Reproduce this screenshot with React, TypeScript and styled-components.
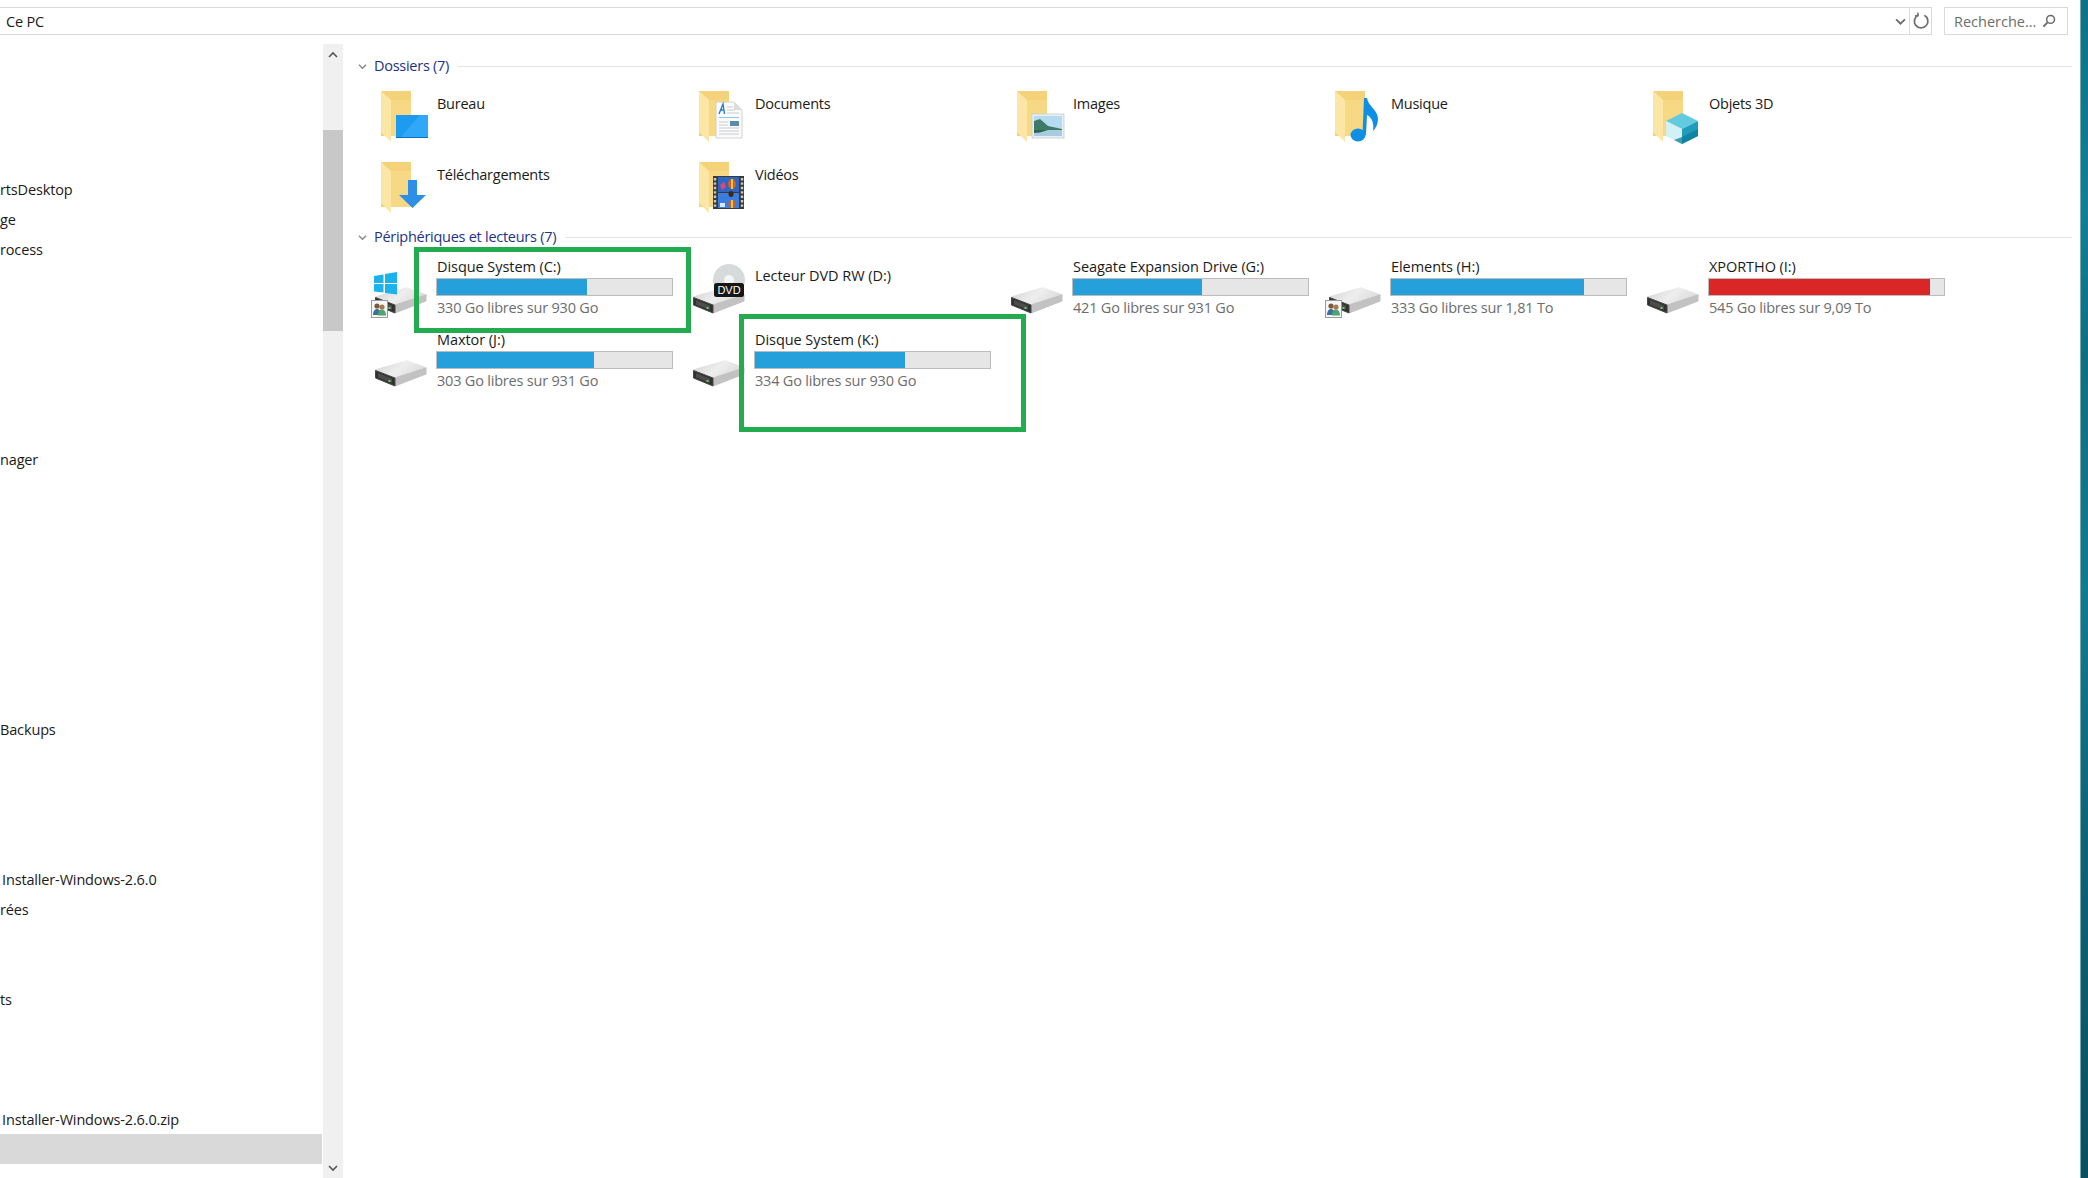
import React from 'react';
import styled, { createGlobalStyle } from 'styled-components';

const GlobalStyle = createGlobalStyle`
  html, body {
    margin: 0;
    padding: 0;
    background: #ffffff;
  }
  body {
    font-family: "Open Sans", "Noto Sans", "Liberation Sans", sans-serif;
    font-size: 14.5px;
    color: #1a1a1a;
    overflow: hidden;
  }
`;

type FolderKind = 'desktop' | 'documents' | 'images' | 'music' | 'objects' | 'downloads' | 'videos';

const folders: { name: string; kind: FolderKind }[] = [
  { name: 'Bureau', kind: 'desktop' },
  { name: 'Documents', kind: 'documents' },
  { name: 'Images', kind: 'images' },
  { name: 'Musique', kind: 'music' },
  { name: 'Objets 3D', kind: 'objects' },
  { name: 'Téléchargements', kind: 'downloads' },
  { name: 'Vidéos', kind: 'videos' },
];

interface Drive {
  name: string;
  free?: string;
  used?: number;
  critical?: boolean;
  logo?: boolean;
  shared?: boolean;
  dvd?: boolean;
  box?: { left: number; top: number; width: number; height: number };
}

const drives: Drive[] = [
  { name: 'Disque System (C:)', free: '330 Go libres sur 930 Go', used: 64, logo: true, shared: true, box: { left: 44, top: -6, width: 277, height: 86 } },
  { name: 'Lecteur DVD RW (D:)', dvd: true },
  { name: 'Seagate Expansion Drive (G:)', free: '421 Go libres sur 931 Go', used: 55 },
  { name: 'Elements (H:)', free: '333 Go libres sur 1,81 To', used: 82, shared: true },
  { name: 'XPORTHO (I:)', free: '545 Go libres sur 9,09 To', used: 94, critical: true },
  { name: 'Maxtor (J:)', free: '303 Go libres sur 931 Go', used: 67 },
  { name: 'Disque System (K:)', free: '334 Go libres sur 930 Go', used: 64, box: { left: 51, top: -12, width: 287, height: 118 } },
];

// la liste de gauche : lignes de 30px, le texte est coupé par le bord de la fenêtre
const navRows: Record<number, { text: string; indent?: boolean }> = {
  4: { text: 'rtsDesktop' },
  5: { text: 'ge' },
  6: { text: 'rocess' },
  13: { text: 'nager' },
  22: { text: 'Backups' },
  27: { text: 'Installer-Windows-2.6.0', indent: true },
  28: { text: 'rées' },
  31: { text: 'ts' },
  35: { text: 'Installer-Windows-2.6.0.zip', indent: true },
};
const SELECTED_ROW = 36;

const FolderBase = () => (
  <>
    <rect x="11" y="3" width="30" height="45" fill="#f3d27a" />
    <rect x="21" y="12" width="20" height="36" fill="#f6d885" />
    <polygon points="11,3 21,12 21,54 11,44" fill="#fbe6a6" />
  </>
);

const FolderOverlay = ({ kind }: { kind: FolderKind }) => {
  switch (kind) {
    case 'desktop':
      return (
        <>
          <rect x="26" y="27" width="32" height="23" fill="#1c9bf0" />
          <polygon points="30,50 50,27 58,27 58,50" fill="#3fb0fb" opacity="0.6" />
          <rect x="26" y="49" width="32" height="1" fill="#0a72c4" />
        </>
      );
    case 'documents':
      return (
        <>
          <polygon points="28,14 46,14 54,22 54,50 28,50" fill="#fbfbfb" stroke="#c9c9c9" strokeWidth="0.8" />
          <polygon points="46,14 54,22 46,22" fill="#dcdcdc" />
          <path d="M31 26 L35 16 L36.5 26 M32.5 22 L36 22" stroke="#2a7fc9" strokeWidth="1.4" fill="none" />
          <path d="M39 19h6M39 22h8M39 25h12M31 40h20M31 43h20M31 46h20" stroke="#c6cacd" strokeWidth="1" />
          <path d="M31 29.5h20" stroke="#8cc6e4" strokeWidth="1" />
          <rect x="42" y="33" width="9" height="5" fill="#5a8ba8" />
          <path d="M31 34h9M31 37h9" stroke="#c6cacd" strokeWidth="1" />
        </>
      );
    case 'images':
      return (
        <>
          <rect x="26" y="26" width="32" height="24" fill="#e8eef2" stroke="#c3ced6" strokeWidth="0.8" />
          <rect x="28" y="28" width="28" height="14" fill="#b5dbf0" />
          <polygon points="28,33 34,31 42,38 56,41 56,43 28,43" fill="#3f7a68" />
          <rect x="28" y="42" width="28" height="6" fill="#a8cbdd" />
          <polygon points="28,42 42,42 34,44.5 28,45" fill="#2f6455" />
        </>
      );
    case 'music':
      return (
        <>
          <ellipse cx="34" cy="47" rx="7.5" ry="6.5" fill="#0f8fe4" />
          <path d="M38.5 47 L40 10 L43 10 C44 18 54 22 54 31 C54 36 52 40 49 43 C50 37 49 30 43 27 L42 47 Z" fill="#0f8fe4" />
        </>
      );
    case 'objects':
      return (
        <>
          <polygon points="40,25 56,33 40,41 24,33" fill="#63cbe0" />
          <polygon points="24,33 40,41 40,56 24,48" fill="#d2f1f6" />
          <polygon points="40,41 56,33 56,48 40,56" fill="#1f9dbb" />
          <polygon points="40,49 56,41 56,48 40,56 32,52" fill="#0f7c9b" opacity="0.75" />
        </>
      );
    case 'downloads':
      return <polygon points="38,21 47,21 47,36 56,36 42.5,49 29,36 38,36" fill="#2d8fe5" />;
    case 'videos':
      return (
        <>
          <rect x="25" y="17" width="31" height="33" fill="#3a3a3a" />
          <path d="M27 19v29M54 19v29" stroke="#c9c9c9" strokeWidth="2.4" strokeDasharray="2.4 2" />
          <rect x="30" y="18" width="21" height="15" fill="#2f66c4" />
          <rect x="30" y="34" width="21" height="15" fill="#3b7ee0" />
          <ellipse cx="44" cy="25" rx="4" ry="5" fill="#c8612a" />
          <rect x="43" y="20" width="2" height="10" fill="#f0c53a" />
          <path d="M32 26l4-3 2 5-4 3z" fill="#d84a7a" />
          <ellipse cx="44" cy="45" rx="3.5" ry="4" fill="#c8612a" />
          <rect x="43" y="41" width="2" height="8" fill="#f0c53a" />
          <ellipse cx="43" cy="35" rx="2.5" ry="3" fill="#3a2a1a" />
          <rect x="32" y="44" width="5" height="4" fill="#dfe6ef" />
        </>
      );
  }
};

const FolderIcon = ({ kind }: { kind: FolderKind }) => (
  <TileIcon viewBox="0 0 67 70">
    <FolderBase />
    <FolderOverlay kind={kind} />
  </TileIcon>
);

const HardDisk = () => (
  <g transform="translate(5 34)" strokeLinejoin="round">
    <defs>
      <linearGradient id="diskTop" x1="0" y1="0" x2="1" y2="0.4">
        <stop offset="0" stopColor="#d2d2d2" />
        <stop offset="0.55" stopColor="#eeeeee" />
        <stop offset="1" stopColor="#dcdcdc" />
      </linearGradient>
    </defs>
    <polygon points="1,10 32,1 51,8 20,18" fill="url(#diskTop)" stroke="url(#diskTop)" strokeWidth="1.5" />
    <polygon points="20,18 51,8 51,14 20,26" fill="#c2c2c2" stroke="#c2c2c2" strokeWidth="1" />
    <polygon points="0.5,10.5 20,18 20,26 0.5,18" fill="#303030" stroke="#484848" strokeWidth="1" />
    <polygon points="3,13 17,18.5 17,23 3,17.5" fill="#4c4c4c" />
    <rect x="13.5" y="20" width="2" height="2" fill="#5fd36a" />
  </g>
);

const WindowsLogo = () => (
  <g fill="#1cb2ee">
    <polygon points="4,23 13.5,21.5 13.5,30 4,30" />
    <polygon points="15,21 27,19 27,30 15,30" />
    <polygon points="4,31 13.5,31 13.5,39.5 4,38.5" />
    <polygon points="15,31 27,31 27,41.5 15,40" />
  </g>
);

const SharedBadge = () => (
  <g transform="translate(1 47)">
    <rect x="0.5" y="0.5" width="16" height="17" fill="#f6f6f6" stroke="#9a9a9a" />
    <circle cx="6" cy="6" r="2.6" fill="#7b5a3c" />
    <path d="M2 15c0-4 2-6 4-6s4 2 4 6z" fill="#3d6f9e" />
    <circle cx="11" cy="7" r="2.6" fill="#a47a52" />
    <path d="M7 15.5c0-4 2-6 4-6s4 2 4 6z" fill="#4ea36e" />
  </g>
);

const DvdDisc = () => (
  <>
    <circle cx="41" cy="27" r="16" fill="#d6dadb" />
    <circle cx="41" cy="27" r="5" fill="#f4f6f6" />
    <rect x="26" y="30" width="30" height="14" rx="2.5" fill="#161616" />
    <DvdLabel x="41" y="41" textAnchor="middle">DVD</DvdLabel>
  </>
);

const DriveIcon = ({ drive }: { drive: Drive }) => (
  <TileIcon viewBox="0 0 67 70">
    <HardDisk />
    {drive.dvd && <DvdDisc />}
    {drive.logo && <WindowsLogo />}
    {drive.shared && <SharedBadge />}
  </TileIcon>
);

const Chevron = ({ up, size = 10 }: { up?: boolean; size?: number }) => (
  <svg width={size} height={size} viewBox="0 0 10 10" fill="none">
    <polyline points={up ? '1,7 5,3 9,7' : '1,3 5,7 9,3'} stroke="currentColor" strokeWidth="1.6" />
  </svg>
);

const FileExplorer = () => (
  <Window>
    <AddressRow>
      <AddressBox>
        <AddressText>Ce PC</AddressText>
        <AddressChevron>
          <Chevron size={11} />
        </AddressChevron>
        <RefreshButton>
          <svg width="18" height="18" viewBox="0 0 16 16" fill="none">
            <path d="M5.4 2.8 A6 6 0 1 0 11 2.9" stroke="#707070" strokeWidth="1.6" />
            <polyline points="5.2,0.6 5.4,3.2 2.6,3.6" stroke="#707070" strokeWidth="1.4" />
          </svg>
        </RefreshButton>
      </AddressBox>
      <SearchBox>
        <span>Recherche...</span>
        <svg width="14" height="14" viewBox="0 0 14 14" fill="none">
          <circle cx="8.6" cy="5.4" r="3.9" stroke="#6a6a6a" strokeWidth="1.5" />
          <line x1="5.6" y1="8.4" x2="1.4" y2="12.6" stroke="#6a6a6a" strokeWidth="1.9" />
        </svg>
      </SearchBox>
    </AddressRow>
    <Body>
      <NavPane>
        {Array.from({ length: SELECTED_ROW + 1 }, (_, i) => (
          <NavRow key={i} $selected={i === SELECTED_ROW} $indent={navRows[i]?.indent}>
            {navRows[i]?.text}
          </NavRow>
        ))}
      </NavPane>
      <ScrollBar>
        <ScrollArrow>
          <Chevron up />
        </ScrollArrow>
        <ScrollThumb />
        <ScrollArrow $bottom>
          <Chevron />
        </ScrollArrow>
      </ScrollBar>
      <Content>
        <SectionHeader>
          <SectionChevron>
            <Chevron size={9} />
          </SectionChevron>
          <SectionTitle>Dossiers (7)</SectionTitle>
          <SectionRule />
        </SectionHeader>
        <FolderGrid>
          {folders.map((folder) => (
            <FolderTile key={folder.name}>
              <FolderIcon kind={folder.kind} />
              <FolderName>{folder.name}</FolderName>
            </FolderTile>
          ))}
        </FolderGrid>
        <SectionHeader>
          <SectionChevron>
            <Chevron size={9} />
          </SectionChevron>
          <SectionTitle>Périphériques et lecteurs (7)</SectionTitle>
          <SectionRule />
        </SectionHeader>
        <DriveGrid>
          {drives.map((drive) => (
            <DriveTile key={drive.name}>
              <DriveIcon drive={drive} />
              <DriveInfo $dvd={drive.dvd}>
                <DriveName>{drive.name}</DriveName>
                {drive.used !== undefined && (
                  <>
                    <UsageBar>
                      <UsageFill $critical={drive.critical} style={{ width: `${drive.used}%` }} />
                    </UsageBar>
                    <DriveFree>{drive.free}</DriveFree>
                  </>
                )}
              </DriveInfo>
              {drive.box && (
                <Highlight
                  $left={drive.box.left}
                  $top={drive.box.top}
                  $width={drive.box.width}
                  $height={drive.box.height}
                />
              )}
            </DriveTile>
          ))}
        </DriveGrid>
      </Content>
    </Body>
  </Window>
);

export default function App() {
  return (
    <Page>
      <GlobalStyle />
      <FileExplorer />
      <DesktopEdge />
    </Page>
  );
}

const Page = styled('div')`
  display: flex;
  width: 2088px;
  height: 1178px;
  overflow: hidden;
`;

const Window = styled('div')`
  flex: 1;
  display: flex;
  flex-direction: column;
  min-width: 0;
`;

const DesktopEdge = styled('div')`
  width: 8px;
  border-left: 1px solid #6fa9b3;
  box-sizing: border-box;
  background: linear-gradient(180deg, #0d7386 0%, #0f8096 18%, #0e6f80 30%, #117c8e 50%, #0e6578 70%, #0b4f60 100%);
`;

const AddressRow = styled('div')`
  display: flex;
  align-items: flex-start;
  gap: 12px;
  height: 44px;
  padding: 7px 12px 0 0;
  box-sizing: border-box;
`;

const AddressBox = styled('div')`
  flex: 1;
  display: flex;
  align-items: center;
  height: 28px;
  box-sizing: border-box;
  border: 1px solid #d9d9d9;
  border-left: none;
`;

const AddressText = styled('div')`
  flex: 1;
  padding-left: 6px;
  letter-spacing: -0.2px;
`;

const AddressChevron = styled('div')`
  display: flex;
  color: #6a6a6a;
  padding-right: 3px;
`;

const RefreshButton = styled('div')`
  display: flex;
  align-items: center;
  justify-content: center;
  width: 21px;
  height: 100%;
  border-left: 1px solid #d9d9d9;
`;

const SearchBox = styled('div')`
  display: flex;
  align-items: center;
  justify-content: space-between;
  width: 124px;
  height: 28px;
  box-sizing: border-box;
  padding: 0 11px 0 9px;
  border: 1px solid #d9d9d9;
  color: #6d6d6d;
`;

const Body = styled('div')`
  flex: 1;
  display: flex;
  min-height: 0;
`;

const NavPane = styled('div')`
  width: 322px;
  margin-right: 1px;
  padding-top: 10px;
  box-sizing: border-box;
  white-space: nowrap;
`;

const NavRow = styled('div')<{ $selected?: boolean; $indent?: boolean }>`
  height: 30px;
  line-height: 32px;
  letter-spacing: -0.15px;
  padding-left: ${(p) => (p.$indent ? '2px' : '0')};
  background: ${(p) => (p.$selected ? '#d9d9d9' : 'transparent')};
`;

const ScrollBar = styled('div')`
  position: relative;
  width: 20px;
  padding-top: 86px;
  box-sizing: border-box;
  background: #f0f0f0;
`;

const ScrollThumb = styled('div')`
  height: 201px;
  background: #c8c8c8;
`;

const ScrollArrow = styled('div')<{ $bottom?: boolean }>`
  position: absolute;
  left: 5px;
  display: flex;
  color: #555555;
  ${(p) => (p.$bottom ? 'bottom: 5px;' : 'top: 6px;')}
`;

const Content = styled('div')`
  flex: 1;
  padding: 14px 8px 0 0;
  min-width: 0;
`;

const SectionHeader = styled('div')`
  display: flex;
  align-items: center;
  height: 16px;
  padding-left: 15px;
`;

const SectionChevron = styled('div')`
  display: flex;
  width: 16px;
  color: #8a8a8a;
`;

const SectionTitle = styled('div')`
  color: #1e3287;
  margin-right: 9px;
  line-height: 16px;
  letter-spacing: -0.27px;
  white-space: nowrap;
`;

const SectionRule = styled('div')`
  flex: 1;
  height: 1px;
  background: #e3e3e3;
`;

const FolderGrid = styled('div')`
  display: grid;
  grid-template-columns: repeat(5, 318px);
  grid-auto-rows: 70px;
  row-gap: 1px;
  margin: 14px 0 0 27px;
`;

const FolderTile = styled('div')`
  display: flex;
`;

const TileIcon = styled('svg')`
  flex: none;
  width: 67px;
  height: 70px;
  overflow: visible;
`;

const FolderName = styled('div')`
  padding-top: 6px;
  line-height: 20px;
  letter-spacing: -0.25px;
`;

const DvdLabel = styled('text')`
  font-family: "Liberation Sans", sans-serif;
  font-size: 11px;
  fill: #ffffff;
`;

const DriveGrid = styled('div')`
  display: grid;
  grid-template-columns: repeat(5, 318px);
  grid-auto-rows: 73px;
  margin: 8px 0 0 27px;
`;

const DriveTile = styled('div')`
  position: relative;
  display: flex;
`;

const DriveInfo = styled('div')<{ $dvd?: boolean }>`
  padding-top: ${(p) => (p.$dvd ? '13px' : '4px')};
`;

const DriveName = styled('div')`
  line-height: 20px;
  margin-bottom: 1px;
  letter-spacing: -0.06px;
  white-space: nowrap;
`;

const UsageBar = styled('div')`
  width: 237px;
  height: 18px;
  margin-left: -1px;
  box-sizing: border-box;
  border: 1px solid #bcbcbc;
  background: #e6e6e6;
`;

const UsageFill = styled('div')<{ $critical?: boolean }>`
  height: 100%;
  background: ${(p) => (p.$critical ? '#da2626' : '#26a0da')};
`;

const DriveFree = styled('div')`
  margin-top: 2px;
  line-height: 20px;
  color: #6d6d6d;
  letter-spacing: -0.2px;
  white-space: nowrap;
`;

const Highlight = styled('div')<{ $left: number; $top: number; $width: number; $height: number }>`
  position: absolute;
  left: ${(p) => p.$left}px;
  top: ${(p) => p.$top}px;
  width: ${(p) => p.$width}px;
  height: ${(p) => p.$height}px;
  box-sizing: border-box;
  border: 5px solid #22ac4f;
`;
